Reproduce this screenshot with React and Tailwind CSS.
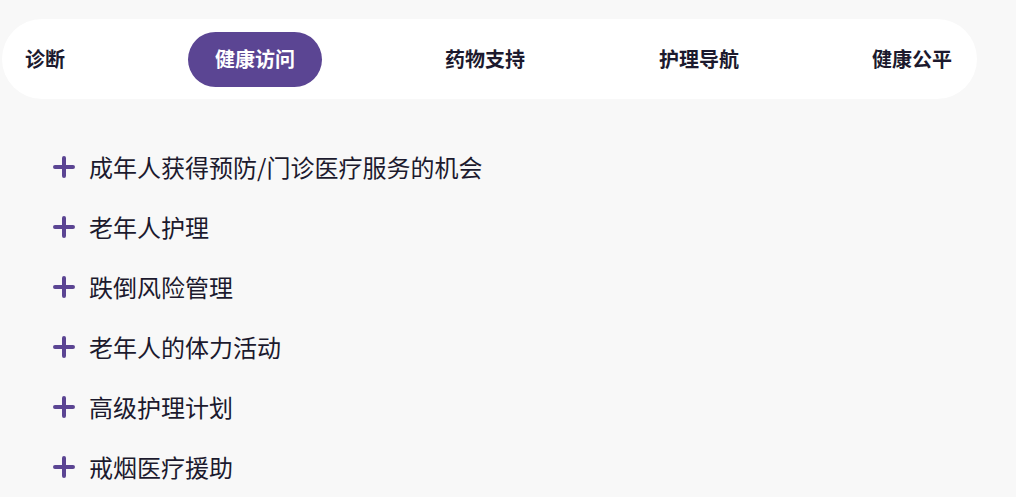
const tabs = [
  { label: '诊断', gap: 'ml-0' },
  { label: '健康访问', gap: 'ml-[123px]', active: true },
  { label: '药物支持', gap: 'ml-[123px]' },
  { label: '护理导航', gap: 'ml-[134px]' },
  { label: '健康公平', gap: 'ml-[133px]' },
];

const items = [
  '成年人获得预防/门诊医疗服务的机会',
  '老年人护理',
  '跌倒风险管理',
  '老年人的体力活动',
  '高级护理计划',
  '戒烟医疗援助',
];

function Plus() {
  return (
    <svg width="22" height="22" viewBox="0 0 22 22" className="shrink-0" aria-hidden>
      <path d="M11 2v18M2 11h18" stroke="#5b4593" strokeWidth="4" strokeLinecap="round" />
    </svg>
  );
}

export default function App() {
  return (
    <div
      className="h-[497px] w-[1016px] overflow-hidden bg-[#f8f8f8] pt-[19px]"
      style={{ fontFamily: '"Noto Sans CJK SC", "Noto Sans", sans-serif' }}
    >
      <nav className="ml-[2px] flex h-[80px] w-[975px] items-center rounded-full bg-white pl-[23px]">
        {tabs.map((t) =>
          t.active ? (
            <span
              key={t.label}
              className={`${t.gap} flex h-[55px] items-center rounded-full bg-[#5b4593] px-[27px] text-[20px] font-bold text-white`}
            >
              {t.label}
            </span>
          ) : (
            <span key={t.label} className={`${t.gap} text-[20px] font-bold leading-none text-[#1c1a2e]`}>
              {t.label}
            </span>
          )
        )}
      </nav>

      <ul className="mt-[38px] flex flex-col pl-[53px]">
        {items.map((it) => (
          <li key={it} className="flex h-[60px] items-center gap-[14px]">
            <Plus />
            <span className="text-[24px] leading-none text-[#1c1a2e]">{it}</span>
          </li>
        ))}
      </ul>
    </div>
  );
}
